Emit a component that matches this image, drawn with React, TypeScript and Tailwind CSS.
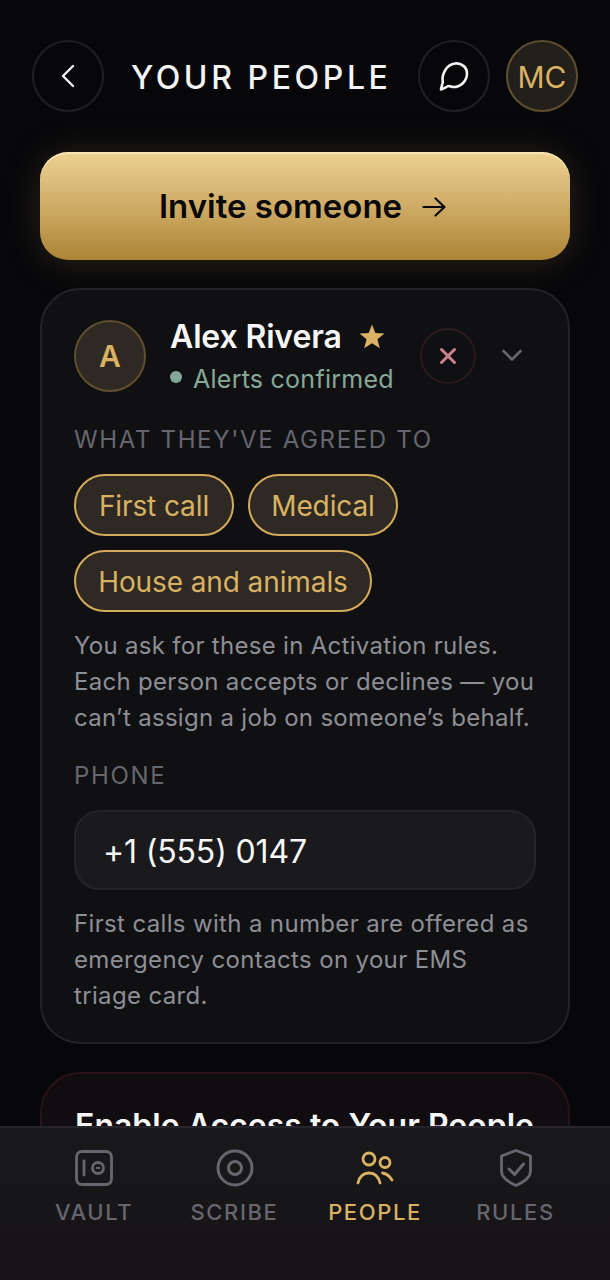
import React from "react";

const Chip = ({ children, w }: { children: React.ReactNode; w: string }) => (
  <span className={`flex h-[62px] items-center justify-center rounded-full border-2 border-[#d4aa5c] bg-[#2e2922] pt-[2px] text-[28px] tracking-[-0.1px] text-[#d9b263] ${w}`}>
    {children}
  </span>
);

const NavItem = ({ label, active, icon, w }: { label: string; active?: boolean; icon: React.ReactNode; w: string }) => (
  <div className={`flex flex-col items-center ${w}`}>
    <div className="flex h-[44px] items-center justify-center">{icon}</div>
    <span className={`mt-[7px] text-[22px] font-medium leading-[30px] tracking-[1.6px] ${active ? "text-[#d9b263]" : "text-[#66666e]"}`}>
      {label}
    </span>
  </div>
);

export default function App() {
  return (
    <div className="relative h-[1280px] w-[610px] overflow-hidden bg-[#07070a] font-['Inter',sans-serif] text-white">
      <div className="flex h-[112px] items-end pl-[32px] pr-[32px]">
        <div className="flex h-[72px] w-[72px] items-center justify-center rounded-full border-2 border-[#1f1f25]">
          <svg width="16" height="24" viewBox="0 0 16 24" fill="none" stroke="#f4f4f5" strokeWidth="2.4" strokeLinecap="round" strokeLinejoin="round">
            <path d="M13 2 3 12l10 10" />
          </svg>
        </div>
        <h1 className="ml-[27px] h-[72px] flex-1 text-[32px] font-medium leading-[76px] tracking-[3.6px] text-[#f4f4f5]">YOUR PEOPLE</h1>
        <div className="flex h-[72px] w-[72px] items-center justify-center rounded-full border-2 border-[#1f1f25]">
          <svg width="32" height="32" viewBox="0 0 32 32" fill="none" stroke="#f4f4f5" strokeWidth="2.6" strokeLinecap="round" strokeLinejoin="round">
            <path d="M3 29.5c.3-2.6 1.2-5 1.8-7.2C3.300 15 8 4.500 17 3.500c6.500-.7 12 3.700 12 10 0 7.500-6.500 14-14 13.500-2-.1-3.500-1.500-5-.800-2 1-4.500 2.700-7 3.300Z" />
          </svg>
        </div>
        <div className="ml-[16px] flex h-[72px] w-[72px] items-center justify-center rounded-full border-2 border-[#5f4e2f] bg-[#231f1a] pt-[2px] text-[30px] text-[#d9b263]">
          MC
        </div>
      </div>

      <div className="mx-[40px] mt-[40px] flex h-[108px] items-center justify-center gap-[20px] rounded-[28px] bg-gradient-to-b from-[#edd192] via-[#cfac66] to-[#ab8435] pr-[5px] pt-[2px] text-[33px] font-semibold text-[#09090b] shadow-[0_2px_36px_rgba(212,170,92,0.18),inset_0_2px_0_rgba(255,240,200,0.6)]">
        <span>Invite someone</span>
        <svg width="24" height="20" viewBox="0 0 24 20" fill="none" stroke="#09090b" strokeWidth="2.2" strokeLinecap="round" strokeLinejoin="round">
          <path d="M1.500 10h21M13.500 1.500l9 8.500-9 8.500" />
        </svg>
      </div>

      <div className="mx-[40px] mt-[28px] h-[756px] rounded-[40px] border-2 border-[#222228] bg-[#101013] px-[32px] pt-[30px]">
        <div className="flex h-[76px]">
          <div className="flex h-[72px] w-[72px] items-center justify-center rounded-full border-2 border-[#5f4e2f] bg-[#2e2922] text-[30px] font-semibold text-[#d9b263]">
            A
          </div>
          <div className="ml-[24px] w-[250px]">
            <div className="-mt-[1px] flex h-[36px] items-center">
              <span className="text-[32px] font-semibold leading-[36px] tracking-[-0.15px] text-[#f7f7f8]">Alex Rivera</span>
              <svg className="ml-[17px] -mt-[2px]" width="26" height="25" viewBox="0 0 24 23" fill="#d9b263">
                <path d="M12 0.500l3.100 7.800 8.400.5-6.500 5.300 2.200 8.200L12 17.700 4.800 22.300 7 14.100.5 8.800l8.400-.5z" />
              </svg>
            </div>
            <div className="mt-[8px] flex h-[32px] items-center">
              <span className="-mt-[4px] h-[12px] w-[12px] rounded-full bg-[#86a898]" />
              <span className="ml-[11px] text-[25px] leading-[32px] tracking-[0.25px] text-[#86a898]">Alerts confirmed</span>
            </div>
          </div>
          <div className="mt-[8px] flex h-[56px] w-[56px] items-center justify-center rounded-full border-2 border-[#2c1a20]">
            <svg width="18" height="18" viewBox="0 0 18 18" stroke="#c9838f" strokeWidth="3" strokeLinecap="round">
              <path d="M2.500 2.500l13 13M15.500 2.500l-13 13" />
            </svg>
          </div>
          <svg className="ml-[25px] mt-[28px]" width="22" height="14" viewBox="0 0 22 14" fill="none" stroke="#66666e" strokeWidth="2.600" strokeLinecap="round" strokeLinejoin="round">
            <path d="M2.500 3 11 11.500 19.500 3" />
          </svg>
        </div>

        <div className="mt-[28px] text-[24px] leading-[32px] tracking-[1.65px] text-[#66666e]">WHAT THEY'VE AGREED TO</div>
        <div className="mt-[18px] flex w-[460px] flex-wrap gap-x-[14px] gap-y-[14px]">
          <Chip w="w-[160px]">First call</Chip>
          <Chip w="w-[150px]">Medical</Chip>
          <Chip w="w-[298px]">House and animals</Chip>
        </div>
        <p className="mt-[16px] text-[24px] leading-[36px] tracking-[0.3px] text-[#8e8e95]">
          You ask for these in Activation rules.
          <br />
          Each person accepts or declines — you
          <br />
          can’t assign a job on someone’s behalf.
        </p>

        <div className="mt-[24px] text-[24px] leading-[32px] tracking-[1.65px] text-[#66666e]">PHONE</div>
        <div className="mt-[18px] flex h-[80px] items-center rounded-[26px] border-2 border-[#24242a] bg-[#1a1a1d] px-[27px] pt-[3px] text-[32px] tracking-[-0.15px] text-[#f7f7f8]">
          +1 (555) 0147
        </div>
        <p className="mt-[16px] text-[24px] leading-[36px] tracking-[0.35px] text-[#8e8e95]">
          First calls with a number are offered as
          <br />
          emergency contacts on your EMS
          <br />
          triage card.
        </p>
      </div>

      <div className="mx-[40px] mt-[28px] h-[300px] rounded-[40px] border-2 border-[#2a1219] bg-[#110c0f] px-[33px] pt-[32px]">
        <div className="text-[32px] font-semibold leading-[40px] text-[#f7f7f8]">Enable Access to Your People</div>
      </div>

      <div className="absolute bottom-0 left-0 right-0 flex h-[154px] border-t-2 border-[#25252b] bg-gradient-to-b from-[#18181b] to-[#161316] pt-[18px]">
        <NavItem
          w="w-[188px]"
          label="VAULT"
          icon={
            <svg width="38" height="36" viewBox="0 0 38 36" fill="none" stroke="#66666e" strokeWidth="2.800" strokeLinecap="round">
              <rect x="1.500" y="1.500" width="35" height="33" rx="5.500" />
              <path d="M9 11v14" />
              <circle cx="23" cy="18" r="5.500" />
              <path d="M21.500 18h3" strokeWidth="2" />
            </svg>
          }
        />
        <NavItem
          w="w-[93px]"
          label="SCRIBE"
          icon={
            <svg width="38" height="38" viewBox="0 0 38 38" fill="none" stroke="#66666e" strokeWidth="3">
              <circle cx="19" cy="19" r="17" />
              <circle cx="19" cy="19" r="6.500" />
            </svg>
          }
        />
        <NavItem
          w="w-[188px]"
          label="PEOPLE"
          active
          icon={
            <svg width="38" height="36" viewBox="0 0 38 36" fill="none" stroke="#d9b263" strokeWidth="2.800" strokeLinecap="round">
              <circle cx="13" cy="9" r="6" />
              <circle cx="29" cy="12.500" r="5" />
              <path d="M2 33c1.500-6.500 5.500-10 11-10s9.500 3.500 11 10" />
              <path d="M26.500 23c3.800.5 7 3 9.500 7" />
            </svg>
          }
        />
        <NavItem
          w="w-[93px]"
          label="RULES"
          icon={
            <svg width="32" height="38" viewBox="0 0 32 38" fill="none" stroke="#66666e" strokeWidth="2.800" strokeLinecap="round" strokeLinejoin="round">
              <path d="M16 1.500 30.500 7v15c0 6.500-6.500 11-14.500 14.500C8 33 1.500 28.500 1.500 22V7z" />
              <path d="M9 20l5.500 5.500L23.500 15" strokeWidth="3" />
            </svg>
          }
        />
      </div>
    </div>
  );
}
